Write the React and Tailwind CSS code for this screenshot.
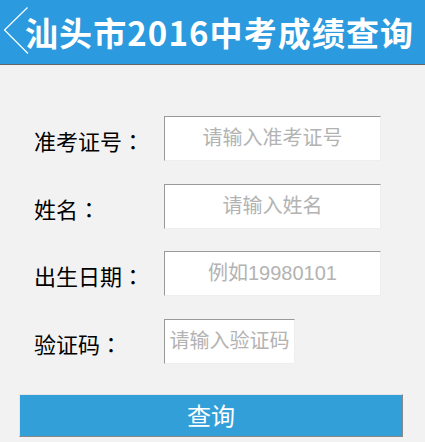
import { useState } from "react";

const fields = [
  { label: "准考证号", placeholder: "请输入准考证号", width: "w-[217px]" },
  { label: "姓名", placeholder: "请输入姓名", width: "w-[217px]" },
  { label: "出生日期", placeholder: "例如19980101", width: "w-[217px]" },
  { label: "验证码", placeholder: "请输入验证码", width: "w-[131px]" },
];

export default function App() {
  const [values, setValues] = useState({});

  return (
    <div className="min-h-[442px] bg-[#f2f2f2] font-['Noto_Sans_CJK_SC',sans-serif]">
      {/* Header */}
      <div className="h-[65px] bg-[#2b9ade] border-b border-[#666] flex items-center">
        <svg width="30" height="64" viewBox="0 0 30 64" className="shrink-0">
          <path d="M27.5 7.5 L4.5 30 L28 53.5" fill="none" stroke="#fff" strokeWidth="1.2" />
        </svg>
        <h1 className="text-white font-bold text-[33px] leading-none -ml-[5px] tracking-[1.1px] whitespace-nowrap">
          汕头市2016中考成绩查询
        </h1>
      </div>

      {/* Form */}
      <div className="pt-[51px] flex flex-col gap-[22.5px]">
        {fields.map((f, i) => (
          <div key={i} className="flex items-center pl-[34px]">
            <span className="w-[130px] text-[22px] text-black leading-none pt-[3px]">
              {f.label}
              <span className="font-['Noto_Sans_CJK_JP',sans-serif]">：</span>
            </span>
            <input
              type="text"
              placeholder={f.placeholder}
              value={values[i] || ""}
              onChange={(e) => setValues({ ...values, [i]: e.target.value })}
              className={`${f.width} h-[45px] bg-white text-center text-[20px] px-0 outline-none font-['Liberation_Sans','Noto_Sans_CJK_SC',sans-serif] border border-t-[#999] border-l-[#999] border-r-[#eee] border-b-[#eee] placeholder:text-[#b3b3b3]`}
            />
          </div>
        ))}
      </div>

      <div className="pl-[19px] pt-[30px]">
        <button className="w-[384px] h-[43px] bg-[#339fd9] text-white text-[24px] leading-none border border-t-[#e6e6e6] border-l-[#e6e6e6] border-r-[#888] border-b-[#888]">
          查询
        </button>
      </div>
    </div>
  );
}
